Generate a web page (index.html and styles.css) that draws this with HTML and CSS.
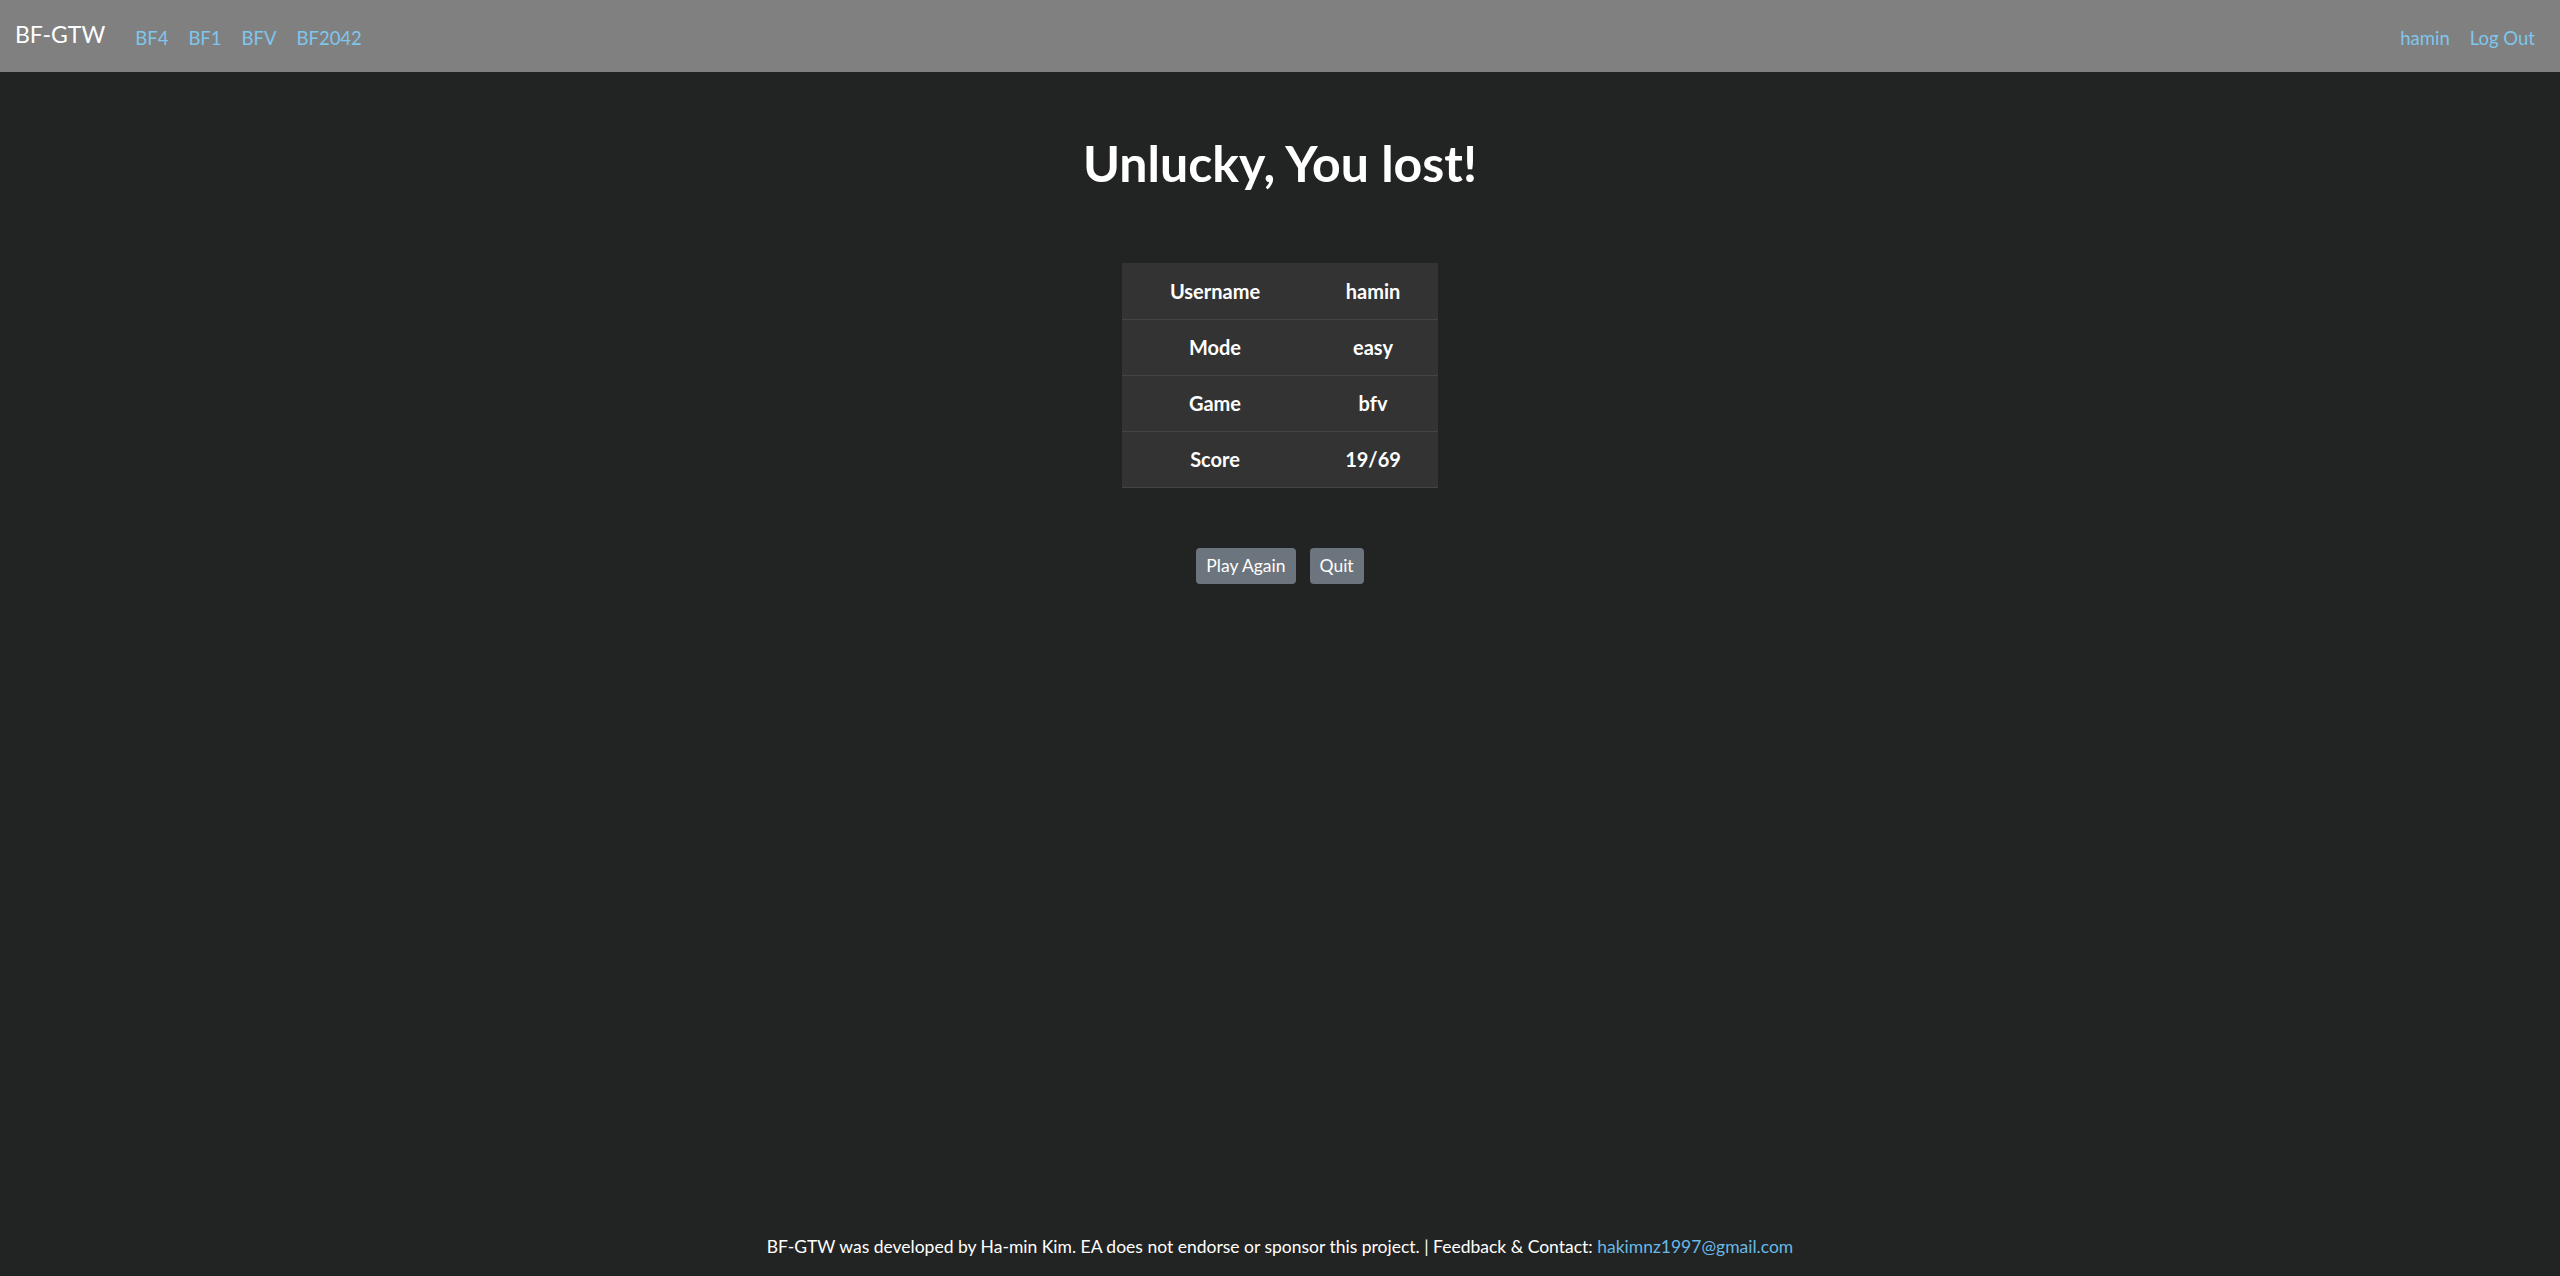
FILE: index.html
```html
<!DOCTYPE html>
<html lang="en">
<head>
<meta charset="utf-8">
<title>BF-GTW</title>
<link rel="stylesheet" href="styles.css">
</head>
<body>
<div class="page">
  <nav class="navbar">
    <a class="brand" href="#">BF-GTW</a>
    <div class="nav-links">
      <a href="#">BF4</a>
      <a href="#">BF1</a>
      <a href="#">BFV</a>
      <a href="#">BF2042</a>
    </div>
    <div class="nav-links nav-right">
      <a href="#">hamin</a>
      <a href="#">Log Out</a>
    </div>
  </nav>
  <main class="content">
    <h1 class="title">Unlucky, You lost!</h1>
    <table class="result">
      <tbody>
        <tr><th>Username</th><td>hamin</td></tr>
        <tr><th>Mode</th><td>easy</td></tr>
        <tr><th>Game</th><td>bfv</td></tr>
        <tr><th>Score</th><td>19/69</td></tr>
      </tbody>
    </table>
    <div class="actions">
      <button class="btn" type="button">Play Again</button>
      <button class="btn" type="button">Quit</button>
    </div>
  </main>
  <footer class="footer">
    BF-GTW was developed by Ha-min Kim. EA does not endorse or sponsor this project. | Feedback &amp; Contact: <a href="#">hakimnz1997@gmail.com</a>
  </footer>
</div>
</body>
</html>
```

FILE: styles.css
```css
* { box-sizing: border-box; }
html, body { margin: 0; padding: 0; }
body {
  background: #222423;
  color: #ffffff;
  font-family: "Segoe UI", Lato, "Noto Sans", sans-serif;
}
a { text-decoration: none; color: #7fc6ec; }
.page {
  min-height: 100vh;
  display: flex;
  flex-direction: column;
}
.navbar {
  height: 72px;
  background: #808080;
  display: flex;
  align-items: center;
  padding: 0 15px;
}
.brand {
  color: #ffffff;
  font-size: 23px;
  margin-right: 20px;
  line-height: 1.5;
  padding-bottom: 4px;
}
.nav-links {
  display: flex;
  margin-top: 6px;
}
.nav-links a {
  font-size: 18.5px;
  padding: 0 10px;
  line-height: 1.5;
}
.nav-right { margin-left: auto; }
.content {
  flex: 1;
  display: flex;
  flex-direction: column;
  align-items: center;
}
.title {
  margin: 61px 0 0;
  font-size: 50px;
  font-weight: 700;
  line-height: 60px;
}
.result {
  margin-top: 70px;
  border-collapse: collapse;
  background: #333333;
}
.result th, .result td {
  font-size: 20px;
  font-weight: 700;
  height: 56px;
  padding: 0;
  text-align: center;
  border-bottom: 1px solid #444444;
}
.result th { width: 186px; }
.result td { width: 130px; }
.actions {
  margin-top: 60px;
  display: flex;
  gap: 14px;
}
.btn {
  font-family: inherit;
  background: #6c757d;
  color: #ffffff;
  border: none;
  border-radius: 4px;
  font-size: 17.5px;
  line-height: 26px;
  padding: 5px 10px;
}
.footer {
  text-align: center;
  font-size: 17.5px;
  line-height: 26px;
  padding-bottom: 16px;
}
.footer a { color: #6ab8e6; }
```
